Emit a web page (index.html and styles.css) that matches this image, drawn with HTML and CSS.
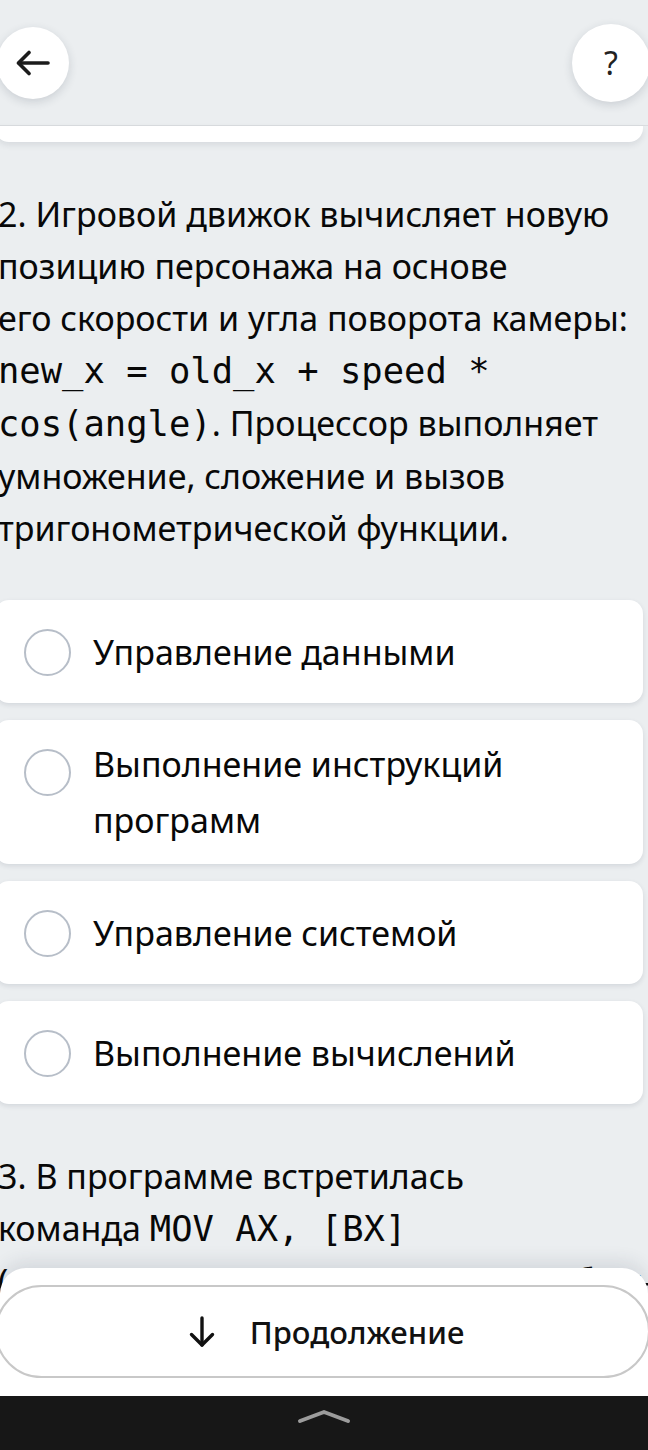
FILE: index.html
```html
<!DOCTYPE html>
<html lang="ru">
<head>
  <meta charset="UTF-8">
  <title>Тест</title>
  <link rel="stylesheet" href="styles.css">
</head>
<body>
  <div class="screen">
    <header class="topbar">
      <button class="round back" aria-label="Назад">
        <svg width="34" height="26" viewBox="0 0 34 26" fill="none" stroke="#1c1c1c" stroke-width="3.6" stroke-linecap="round" stroke-linejoin="round">
          <path d="M32 13H3"/>
          <path d="M13 2.5L2.5 13L13 23.5"/>
        </svg>
      </button>
      <button class="round help" aria-label="Помощь">?</button>
    </header>

    <div class="prev-card"></div>

    <section class="question">
      <p class="q-text">2. Игровой движок вычисляет новую<br>позицию персонажа на основе<br>его скорости и угла поворота камеры:<br><code>new_x = old_x + speed *</code><br><code>cos(angle)</code>. Процессор выполняет<br>умножение, сложение и вызов<br>тригонометрической функции.</p>

      <ul class="options">
        <li class="option">
          <span class="radio"></span>
          <span class="label">Управление данными</span>
        </li>
        <li class="option">
          <span class="radio"></span>
          <span class="label">Выполнение инструкций<br>программ</span>
        </li>
        <li class="option">
          <span class="radio"></span>
          <span class="label">Управление системой</span>
        </li>
        <li class="option">
          <span class="radio"></span>
          <span class="label">Выполнение вычислений</span>
        </li>
      </ul>
    </section>

    <section class="question">
      <p class="q-text">3. В программе встретилась<br>команда <code>MOV AX, [BX]</code><br>(косвенная адресация). Почему выбран этот<br>способ обращения к памяти?</p>
    </section>
  </div>

  <footer class="footer">
    <div class="sheet">
      <button class="continue">
        <svg width="26" height="32" viewBox="0 0 26 32" fill="none" stroke="#111" stroke-width="3.4" stroke-linecap="round" stroke-linejoin="round">
          <path d="M13 2V29"/>
          <path d="M2.5 18.5L13 29L23.5 18.5"/>
        </svg>
        <span>Продолжение</span>
      </button>
    </div>
    <div class="navbar">
      <svg width="56" height="18" viewBox="0 0 56 18" fill="none" stroke="#9c9c9c" stroke-width="4" stroke-linecap="round" stroke-linejoin="round">
        <path d="M4 14L28 5L52 14"/>
      </svg>
    </div>
  </footer>
</body>
</html>
```

FILE: styles.css
```css
* {
  box-sizing: border-box;
}

body {
  margin: 0;
  background: #ebeef0;
  font-family: 'Noto Sans', sans-serif;
  color: #080808;
  overflow: hidden;
}

.screen {
  width: 648px;
}

.topbar {
  height: 126px;
  display: flex;
  justify-content: space-between;
  align-items: center;
  border-bottom: 1px solid #dadde0;
}

.round {
  border: none;
  background: #fff;
  border-radius: 50%;
  padding: 0;
  display: flex;
  align-items: center;
  justify-content: center;
  box-shadow: 0 3px 10px rgba(40, 50, 70, 0.16);
}

.back {
  width: 72px;
  height: 72px;
  margin-left: -3px;
}

.help {
  width: 78px;
  height: 78px;
  margin-right: -2px;
  font-family: 'Noto Sans', sans-serif;
  font-size: 32px;
  color: #222;
}

.prev-card {
  width: 648px;
  height: 16px;
  margin-left: -5px;
  background: #fff;
  border-radius: 0 0 14px 14px;
  box-shadow: 0 3px 6px rgba(40, 50, 70, 0.1);
}

.question {
  padding-top: 46px;
}

.q-text {
  margin: 0 0 46px -2px;
  font-size: 34px;
  line-height: 52px;
  white-space: nowrap;
}

code {
  font-family: 'DejaVu Sans Mono', monospace;
  font-size: 35.5px;
}

.options {
  list-style: none;
  margin: 0;
  padding: 0;
  display: flex;
  flex-direction: column;
  gap: 17px;
}

.option {
  width: 648px;
  min-height: 103px;
  margin-left: -5px;
  padding: 16px 20px 16px 29px;
  background: #fff;
  border-radius: 14px;
  box-shadow: 0 2px 5px rgba(40, 50, 70, 0.12);
  display: flex;
  align-items: center;
  gap: 22px;
}

.radio {
  align-self: flex-start;
  flex: none;
  width: 47px;
  height: 47px;
  margin-top: 13px;
  border: 2px solid #b7bec8;
  border-radius: 50%;
}

.label {
  font-size: 34px;
  line-height: 56px;
}

.footer {
  position: fixed;
  left: 0;
  right: 0;
  bottom: 0;
}

.sheet {
  background: #fff;
  border-radius: 26px 26px 0 0;
  padding: 17px 0 18px;
  box-shadow: 0 -6px 18px rgba(40, 50, 70, 0.12);
}

.continue {
  width: 655px;
  height: 93px;
  margin-left: -5px;
  padding: 0 0 0 8px;
  border: 2px solid #c8c8c8;
  border-radius: 47px;
  background: #fff;
  display: flex;
  align-items: center;
  justify-content: center;
  gap: 35px;
  font-family: 'Noto Sans', sans-serif;
  font-size: 31px;
  font-weight: 500;
  color: #111;
}

.navbar {
  height: 54px;
  background: #171717;
  display: flex;
  justify-content: center;
  align-items: flex-start;
  padding-top: 11px;
}
```
